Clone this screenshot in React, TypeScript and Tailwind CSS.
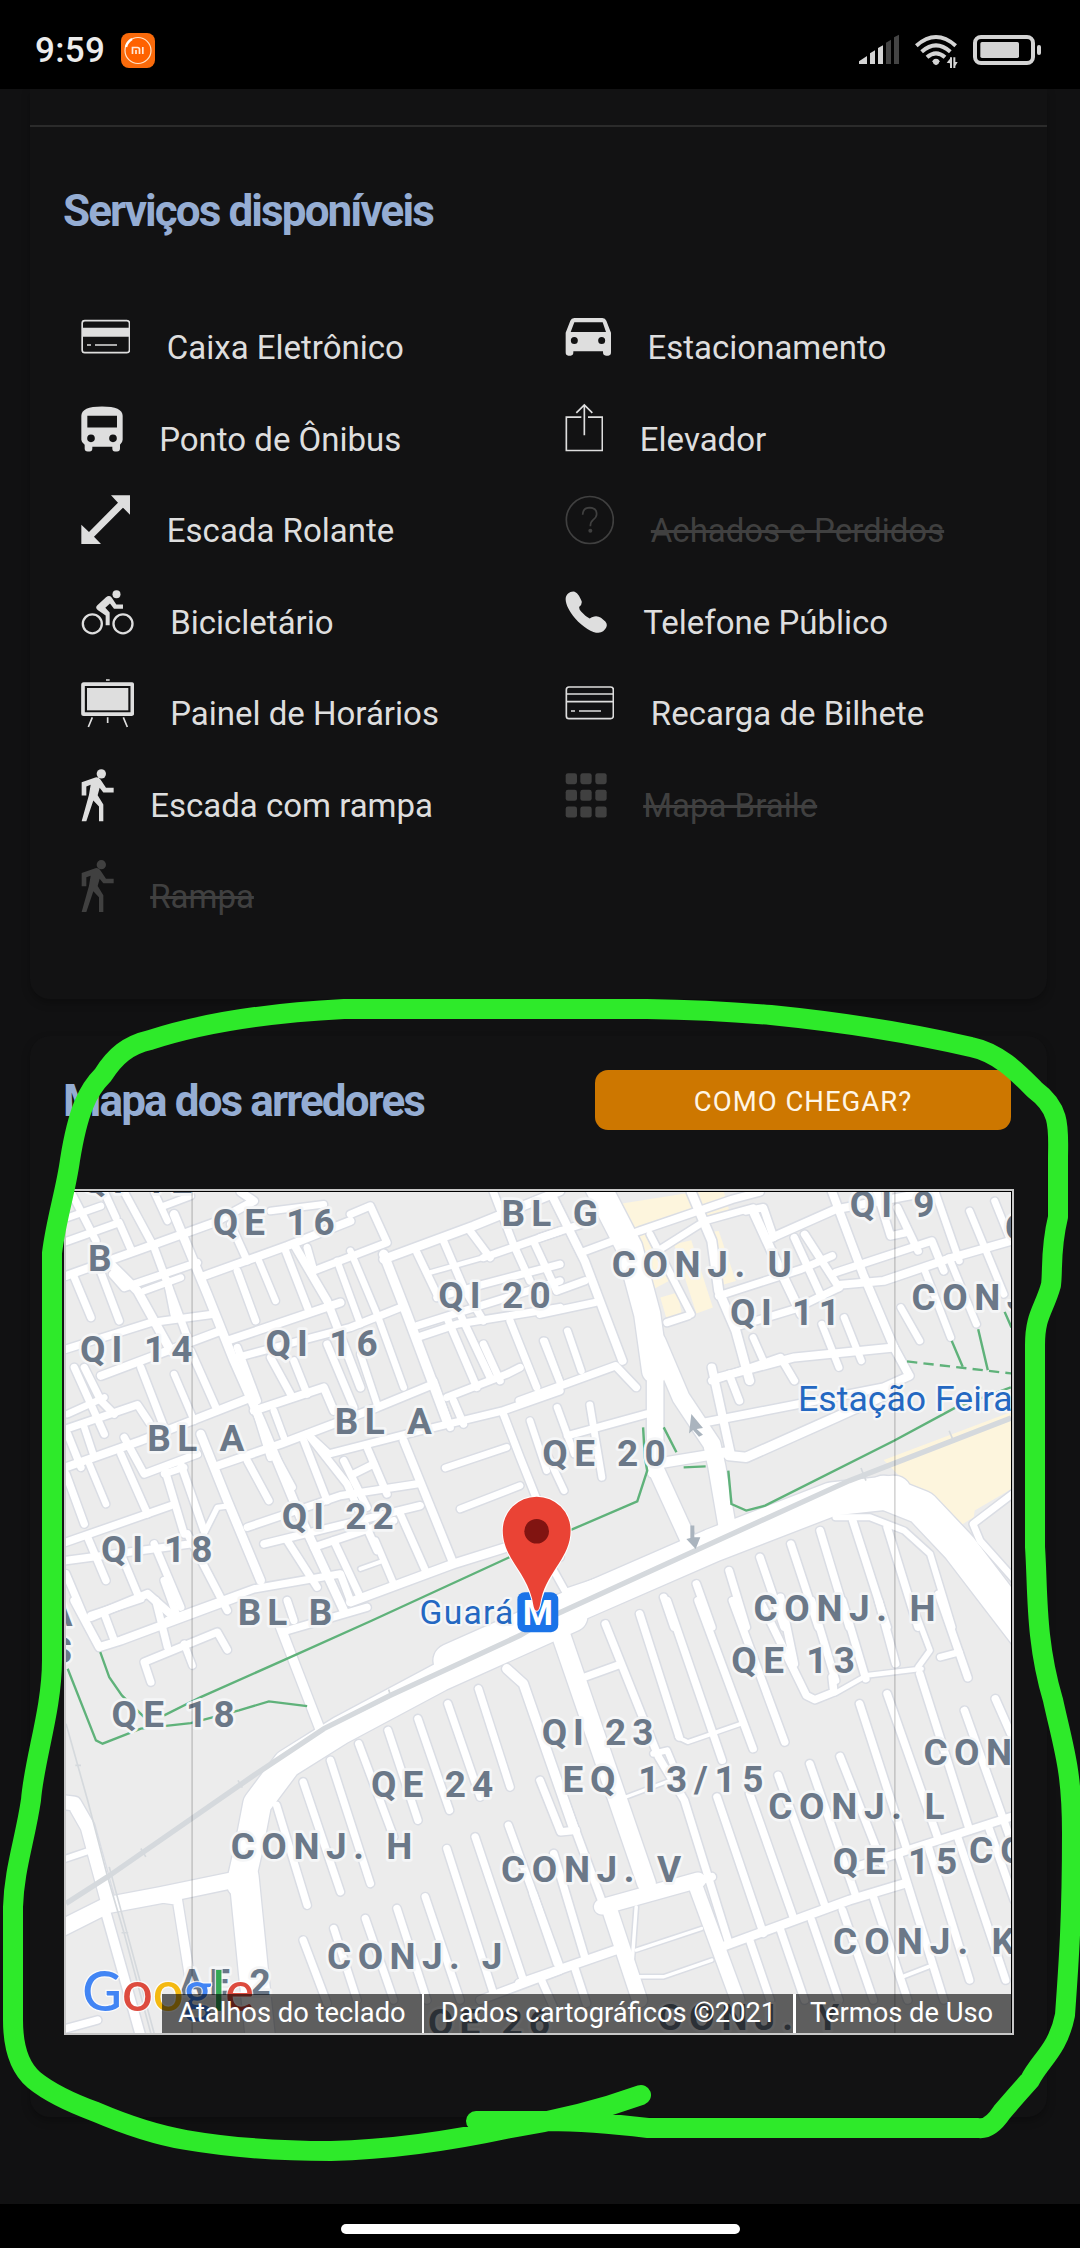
import React from "react";

type Service = {
  label: string;
  icon: React.ReactNode;
  x: number;
  y: number;
  w: number;
  off?: boolean;
};

const walker = (dy: number) => (
  <g transform={`translate(0 ${dy})`} fill="currentColor">
    <circle cx="184" cy="520" r="14" />
    <path d="M125 545L166 531Q176 528 182 538L198 562H221V576H190L179 562L173 584L190 612V662H177V618L160 600L139 662H125L147 583L152 553L139 558V585H125Z" />
  </g>
);

const left: Service[] = [
  {
    label: "Caixa Eletrônico", x: 123, y: 27, w: 148,
    icon: (
      <g fill="none" stroke="currentColor" strokeWidth="4">
        <rect x="126.500" y="92" width="142" height="96" rx="8" strokeWidth="5" />
        <path d="M126 113H268V140H126Z" fill="currentColor" stroke="none" />
        <path d="M141 165H153M165 165H231" strokeWidth="5" />
      </g>
    ),
  },
  {
    label: "Ponto de Ônibus", x: 123, y: 301.5, w: 125,
    icon: (
      <path fill="currentColor" fillRule="evenodd" d="M124 376Q124 348 186 348Q248 348 248 376V448Q248 456 240 463V474Q240 483 231 483H225Q217 483 217 474V469H157V474Q157 483 149 483H143Q134 483 134 474V463Q124 456 124 448ZM142 376V411H231V376ZM153 432A11 11 0 1 0 153 455A11 11 0 1 0 153 432ZM219 432A11 11 0 1 0 219 455A11 11 0 1 0 219 432Z" />
    ),
  },
  {
    label: "Escada Rolante", x: 123, y: 576, w: 148,
    icon: <path fill="currentColor" d="M213 616H270V674L249 653L162 740L183 762H124V704L147 726L234 638Z" />,
  },
  {
    label: "Bicicletário", x: 123, y: -79.5, w: 158,
    icon: (
      <g fill="none" stroke="currentColor" strokeWidth="7">
        <circle cx="157" cy="70" r="28.500" />
        <circle cx="249" cy="70" r="28.500" />
        <g fill="currentColor" stroke="none">
          <circle cx="229.500" cy="-19" r="12" />
          <path d="M172 14L198 -10Q208 -17 215 -9L229 12H249V25H222L210 9L196 22L209 36V74H197V45L174 29Q164 21 172 14Z" />
        </g>
      </g>
    ),
  },
  {
    label: "Painel de Horários", x: 123, y: 195, w: 158,
    icon: (
      <g fill="none" stroke="currentColor">
        <rect x="129" y="252.500" width="148" height="90" rx="2" strokeWidth="11" />
        <rect x="141" y="264" width="124" height="67" fill="currentColor" stroke="none" />
        <path d="M198 240H209M203 352V369M157 352L145 381M250 352L262 381" strokeWidth="5" />
      </g>
    ),
  },
  { label: "Escada com rampa", x: 123, y: 469.5, w: 98, icon: walker(0) },
  { label: "Rampa", x: 123, y: 744, w: 98, icon: walker(274), off: true },
];

const right: Service[] = [
  {
    label: "Estacionamento", x: 75, y: 27, w: 138,
    icon: (
      <path fill="currentColor" fillRule="evenodd" d="M77 128L91 92Q94 84 103 84H187Q196 84 199 92L213 128V187Q213 197 205 197H198Q189 197 189 187V184H100V187Q100 197 92 197H85Q77 197 77 187ZM92 126H198L188 97H103ZM103 141A10.500 10.500 0 1 0 103 162A10.500 10.500 0 1 0 103 141ZM185 141A10.500 10.500 0 1 0 185 162A10.500 10.500 0 1 0 185 141Z" />
    ),
  },
  {
    label: "Elevador", x: 75, y: 301.5, w: 115,
    icon: <path fill="none" stroke="currentColor" strokeWidth="5" d="M124 380H79V480H187V380H144M133 434V343M109 367L133 343L157 367" />,
  },
  {
    label: "Achados e Perdidos", x: 75, y: 576, w: 148, off: true,
    icon: (
      <g fill="none" stroke="currentColor" strokeWidth="5">
        <circle cx="149.500" cy="690" r="70.500" />
        <path d="M128 674Q129 653 149 653Q170 654 170 672Q170 681 160 689Q151 696 151 709" />
        <circle cx="151" cy="722" r="6" fill="currentColor" stroke="none" />
      </g>
    ),
  },
  {
    label: "Telefone Público", x: 75, y: -79.5, w: 125,
    icon: <path fill="currentColor" d="M77 -6C78 -18 88 -27 100 -27C111 -26 118 -14 125 2Q127 12 118 19Q116 25 124 34Q136 48 149 54Q155 50 163 48Q174 46 183 52L196 63Q203 71 199 80Q192 95 175 97C158 97 128 80 105 53C88 33 76 10 77 -6Z" />,
  },
  {
    label: "Recarga de Bilhete", x: 75, y: 195, w: 148,
    icon: (
      <g fill="none" stroke="currentColor" strokeWidth="5">
        <rect x="79" y="261" width="141" height="95" rx="8" />
        <path d="M79 282H220M79 305H220M93 333H105M117 333H183" />
      </g>
    ),
  },
  {
    label: "Mapa Braile", x: 75, y: 469.5, w: 125, off: true,
    icon: (
      <g fill="currentColor">
        {[518, 568, 618].map((y) => [77, 121, 166].map((x) => <rect key={`${x}-${y}`} x={x} y={y} width="34" height="33" rx="7" />))}
      </g>
    ),
  },
];

function ServiceRow({ s }: { s: Service }) {
  return (
    <li className={`flex h-[91.5px] ${s.off ? "text-[#404040]" : "text-[#dedede]"}`}>
      <svg className="h-[91.5px] shrink-0" width={s.w / 3} viewBox={`${s.x} ${s.y} ${s.w} 274.5`}>
        {s.icon}
      </svg>
      <span className={`ml-[36.5px] pt-[29px] text-[33px] leading-[40px] whitespace-nowrap ${s.off ? "line-through" : ""}`}>{s.label}</span>
    </li>
  );
}

type Road = [number, string];

const roadsA: Road[] = [
  [20, "75,182 235,125 270,205"], [22, "75,285 300,205 520,125 640,60 600,33"], [20, "215,280 250,320 470,245"],
  [22, "490,285 740,195 930,120"], [20, "800,200 820,270 1040,185 990,75 930,100"], [24, "1030,235 1300,135 1560,30"],
  [12, "1170,275 1330,230"], [20, "1330,230 1560,150"], [20, "1190,350 1330,310 1560,250"], [20, "1130,435 1240,400 1400,350 1560,300"],
  [20, "75,505 330,425 520,400"], [22, "180,585 380,510 540,450"], [22, "560,480 900,365"], [20, "590,530 930,440 1080,380"],
  [20, "75,745 290,672 325,725"], [22, "75,860 300,780 620,655"], [20, "250,770 310,880 470,820"], [22, "640,690 850,620 880,690"],
  [22, "530,855 720,790 1010,680 1180,610"], [20, "800,760 865,820 1100,760 1390,690 1560,630"], [20, "1130,470 1250,430 1560,380"],
  [20, "1220,650 1400,580 1440,560"], [20, "75,1085 390,975"], [20, "75,1140 450,1090"], [20, "620,1040 900,945 1130,910"], [20, "670,1090 1140,975"],
  [20, "380,1320 640,1225 900,1180 930,1260"], [24, "930,1265 1240,1150 1400,1100 1560,1040"], [20, "820,1100 1060,1020"], [18, "1215,862 1400,800"], [18, "1260,985 1440,915"],
  [20, "1390,700 1440,830 1560,1130"], [22, "150,1310 320,1240 400,1310"], [10, "960,1165 1030,1140"],
  [20, "90,33 165,180"], [18, "80,110 180,75"], [20, "190,33 225,110"], [18, "370,75 450,45"], [18, "340,33 380,120"], [20, "250,33 340,200 440,470"], [24, "400,100 500,340 580,540 660,720 780,1010 910,1290"],
  [24, "480,760 560,960 660,1200"], [18, "690,90 850,70"], [20, "570,130 620,240"], [20, "590,270 645,420"], [18, "655,240 705,360"], [20, "735,210 805,390"],
  [22, "760,190 860,360 960,620"], [18, "890,240 960,430"], [26, "1030,220 1100,400 1220,720"], [18, "930,210 1010,400 1090,620"],
  [20, "1130,215 1190,340"], [20, "1210,180 1270,320 1330,420"], [20, "1290,150 1350,230"], [20, "1360,33 1420,190 1470,300"], [20, "1480,180 1550,330"],
  [20, "100,290 150,410"], [20, "180,275 235,420"], [24, "210,250 290,330 390,510"], [20, "380,300 400,400"], [18, "310,330 420,290"],
  [20, "100,560 190,760"], [20, "130,560 180,660 220,700"], [20, "300,560 370,740"], [18, "400,580 460,720"], [20, "450,510 530,690"], [18, "190,650 80,700"],
  [20, "590,500 650,660"], [20, "690,530 750,640"], [20, "760,540 800,640"], [20, "860,490 940,680"], [18, "960,520 1010,670"], [20, "1220,410 1310,620"], [20, "1260,400 1350,590"],
  [20, "1330,490 1380,600"], [20, "1410,420 1490,620"], [16, "1515,480 1560,600"], [18, "1470,720 1520,870"],
  [22, "1090,780 1240,1150"], [20, "1180,600 1230,740"], [20, "1240,660 1270,730"],
  [20, "80,760 120,860"], [18, "130,740 160,830"], [20, "75,880 130,1030"], [18, "145,850 195,970"], [20, "240,820 320,1000"], [20, "370,860 430,1060"], [20, "420,850 490,1050"],
  [18, "370,880 430,860"], [14, "480,1080 530,980 570,975"], [20, "620,840 685,960"], [20, "690,800 755,920"], [20, "790,780 860,960"], [20, "810,770 920,910 1010,1110"],
  [20, "910,840 980,980"], [20, "980,800 1040,940"], [20, "940,880 1000,850"], [20, "140,1070 195,1200"], [20, "240,1120 290,1240"], [20, "340,1090 420,1280"], [20, "440,1060 560,1290"],
  [20, "75,1180 130,1310"], [20, "740,1080 830,1220"], [20, "880,1080 960,1250"], [18, "1005,1080 1060,1210"], [20, "1080,1000 1160,1180"], [20, "650,700 690,830"], [18, "700,690 730,770"],
];

const roadsB: Road[] = [
  [76, "160,0 260,200 312,400 335,570"], [48, "335,500 335,870"], [46, "335,860 450,1120"], [50, "340,480 410,650 500,790 515,860 550,1070"], [30, "335,850 540,815"],
  [100, "-260,1440 100,1275 500,1095 850,955 1030,935"], [100, "1000,935 1110,980 1220,1100 1420,1370"],
  [20, "120,215 290,150 560,55 640,33"], [18, "350,205 480,120 620,80"], [20, "520,345 760,265 850,225"], [22, "670,172 860,85 1130,33"], [20, "600,90 650,80 680,170"],
  [20, "860,275 1140,180 1175,270"], [22, "870,312 1000,300 1200,230 1370,180"], [20, "370,425 430,405"], [20, "580,435 740,385 870,320"], [20, "0,400 160,365"],
  [20, "-60,660 220,555 280,620"], [20, "0,170 120,130"], [20, "50,330 130,300"], [22, "30,33 130,240 240,540"], [18, "80,450 120,570"], [18, "10,480 60,610"],
  [24, "440,33 500,180 520,330 570,450 610,600"], [18, "320,160 440,400"], [20, "500,600 700,530 740,600"], [22, "500,560 555,820"],
  [22, "480,725 1000,620 1075,585 1030,500 940,280 850,33"], [26, "550,825 600,830 860,710 1010,640"], [22, "520,590 740,530 1030,500"], [24, "620,90 700,270 760,400"],
  [18, "820,430 870,560"], [18, "885,410 935,540"], [20, "740,170 820,350"], [20, "770,160 870,320"], [20, "980,33 1020,165 1065,155"], [20, "1040,80 1100,210"], [20, "550,580 580,660"],
  [18, "620,470 650,540"], [18, "1050,380 1105,480"], [18, "1120,270 1195,470"], [18, "1190,230 1270,430"], [18, "1250,90 1350,340"], [18, "1323,60 1370,180"], [18, "1150,33 1220,240"],
  [20, "80,765 310,700"], [18, "50,680 100,820"], [18, "145,672 180,890"], [18, "20,820 70,930"], [18, "40,1170 75,1235 205,1190"],
  [20, "360,1250 390,1340"], [20, "455,1210 500,1340"], [20, "550,1170 600,1340"], [20, "640,1130 710,1340"], [20, "730,1090 810,1340"], [20, "815,1050 900,1340"], [20, "910,1020 1010,1340"], [20, "1010,1040 1100,1340"],
  [16, "860,1010 960,1010 1060,1050 1135,1120 1200,1340"], [18, "1400,920 1260,1030 1280,1080 1400,1220"],
];

const roadsC: Road[] = [
  [84, "1600,50 1200,230 900,390 740,490 650,610 625,740 600,850"], [88, "610,830 640,1130 660,1320"], [48, "600,835 360,885 200,915 60,985"], [42, "60,605 100,610 140,680 200,900"],
  [26, "190,920 300,1310"], [28, "340,890 410,900 450,1150"], [16, "60,780 150,750"], [20, "60,1290 170,1260"],
  [22, "100,0 175,140 240,120 590,-10"], [20, "150,45 300,-5"], [20, "190,40 220,120"], [20, "345,0 380,140"], [20, "330,245 310,185 530,95 560,148"], [18, "430,130 455,195"],
  [28, "720,80 840,390"], [20, "740,90 980,20"], [20, "370,-60 410,50"], [20, "740,0 760,60"],
  [20, "708,615 800,915"], [20, "788,545 900,875"], [20, "870,480 990,850"], [20, "955,430 1060,710"], [20, "1043,390 1133,660"], [20, "1133,355 1228,630"], [20, "1223,310 1320,590"], [20, "1315,265 1410,560"],
  [26, "1400,205 1450,250 1600,680"], [20, "1405,675 1560,1100"], [20, "1305,710 1450,1140"], [20, "1220,745 1360,1180"], [20, "1155,890 1260,1200"], [20, "1070,925 1160,1200"], [20, "975,955 1060,1200"], [20, "880,985 950,1200"], [20, "788,1020 860,1210"],
  [22, "1320,1200 1560,1110"], [20, "1500,1130 1540,1220"],
];

const roadsD: Road[] = [
  [54, "60,100 170,430 310,850"], [46, "180,920 460,840"], [22, "440,850 500,830"], [44, "200,920 290,1200"], [40, "450,850 575,1200"],
  [20, "190,70 345,470 420,600 550,1030"], [20, "130,230 225,195"], [20, "290,40 405,410"], [10, "400,410 430,425 590,368"], [20, "370,0 530,480"], [20, "460,0 620,445"], [20, "560,0 712,425"],
  [20, "640,0 775,285 800,298 855,275 850,230"], [20, "700,-10 740,190"], [20, "790,0 860,240"], [20, "880,0 948,235"], [20, "985,0 1035,190"], [14, "1080,0 1135,150 1100,200"], [20, "1160,-20 1245,232"],
  [18, "1165,170 1220,155"], [12, "860,278 950,225 1110,205"], [20, "1105,220 1250,690"], [20, "1010,280 1160,720"], [20, "930,310 1065,740"], [20, "873,468 1000,800"], [20, "785,490 920,890"], [20, "693,525 830,920"], [20, "610,580 740,960"], [20, "515,590 650,1000"],
  [20, "1235,330 1370,720"], [20, "1325,295 1370,400"], [24, "530,1040 900,900 1060,850"], [22, "920,800 1370,650"],
  [20, "610,1020 670,1200"], [20, "700,990 770,1200"], [20, "790,960 870,1200"], [20, "880,930 970,1200"], [20, "970,890 1070,1200"], [20, "1045,770 1175,1200"], [20, "1130,740 1250,1140"], [20, "1215,710 1355,1140"], [20, "1305,680 1380,900"],
  [10, "1055,1130 1130,1100"], [24, "-60,1150 220,1050"], [20, "-20,880 50,1090"], [20, "40,760 130,1070"], [20, "0,540 60,695 105,690"], [20, "60,570 190,930"], [20, "100,1100 135,1210"], [8, "280,920 265,1130 360,1130 500,1080"], [8, "280,1050 470,985"], [16, "330,460 370,450 390,500"], [8, "250,590 380,540"],
];

const quads: [string, Road[]][] = [
  ["translate(0 0)", roadsA],
  ["translate(1500 0) scale(1.0332 1)", roadsB],
  ["translate(0 1260)", roadsC],
  ["translate(1500 1260) scale(1.0332 1)", roadsD],
];

const labels: [string, number, number, number][] = [
  ["QI 12", 120, 37, 336], ["QE 16", 516, 165, 367], ["B", 141, 272, 0], ["BL G", 1384, 138, 290], ["QI 20", 1194, 383, 338], ["QI 14", 117, 545, 338], ["QI 16", 675, 527, 337],
  ["BL A", 319, 812, 292], ["BL A", 883, 762, 292], ["QI 22", 724, 1047, 336], ["QI 18", 180, 1145, 335], ["BL B", 591, 1335, 285], ["QE 18", 212, 1642, 370], ["QE 24", 992, 1852, 367],
  ["CONJ. H", 570, 2037, 546], ["CONJ. J", 860, 2370, 527], ["AE 2", 416, 2447, 274], ["CONJ. V", 1383, 2107, 541], ["QI 23", 1505, 1695, 336], ["EQ 13/15", 1568, 1838, 604],
  ["QE 13", 2075, 1480, 372], ["CONJ. H", 2142, 1325, 547], ["CONJ. L", 2186, 1918, 530], ["QE 15", 2380, 2082, 374], ["CO", 2790, 2050, 170], ["CON", 2653, 1757, 266], ["CONJ. K", 2381, 2325, 547],
  ["QI 9", 2431, 110, 255], ["CONJ. U", 1716, 290, 541], ["QI 11", 2071, 433, 331], ["CONJ", 2617, 388, 348], ["QE 20", 1507, 857, 371], ["C", 2898, 180, 0], ["A", 20, 1340, 0], ["S", 25, 1450, 0],
  ["QE 26", 1163, 2568, 367], ["CONJ. Y", 1854, 2552, 545],
];

const casingWidth = (w: number) => (w <= 26 ? w + 11 : w + 8);
const fillWidth = (w: number) => (w <= 26 ? w + 2 : w);

function MapCanvas() {
  return (
    <svg className="block h-full w-full" viewBox="75 33 2841 2526" preserveAspectRatio="none" fontFamily="Roboto, sans-serif">
      <rect x="75" y="33" width="2841" height="2526" fill="#ececec" />
      <g transform={quads[1][0]} fill="#fdf5dd">
        <path d="M225 70L450 33H535L552 92L260 145ZM285 165L325 150L375 300L335 322ZM350 350L400 335L415 410L370 420ZM390 190L440 178L503 380L455 398ZM475 155L520 150L570 300L530 312Z" />
        <path d="M1380 690L1000 838L1040 880L1080 920L1215 1040L1262 1010L1265 990L1380 920Z" />
      </g>
      {[true, false].map((casing) => (
        <g key={String(casing)} fill="none" stroke={casing ? "#dadde4" : "#ffffff"} strokeLinecap="round" strokeLinejoin="round">
          {quads.map(([t, roads]) => (
            <g key={t} transform={t}>
              {roads.map(([w, p], i) => <polyline key={i} points={p} strokeWidth={casing ? casingWidth(w) : fillWidth(w)} />)}
            </g>
          ))}
        </g>
      ))}
      <g fill="none" stroke="#d5d9dd">
        <path d="M2916 712L2430 900L1934 1125L1540 1305L1440 1365L1050 1545L850 1645L640 1785L200 2090L75 2170" strokeWidth="16" />
        <path d="M75 1630L140 1860L200 2090L250 2260L330 2560M205 2060L340 2560" strokeWidth="5" />
        <path d="M103 1755H120M300 2005L315 2030M592 1800L605 1822M1045 1527L1052 1550M2465 862L2480 900M2730 750L2745 785M242 2258H262" strokeWidth="5" />
      </g>
      <g fill="none" stroke="#5fb27a" strokeWidth="7">
        <path d="M1408 1130L995 1320L750 1430L480 1550L370 1605M178 1415L205 1490L243 1545L310 1610M80 1465L165 1680L185 1690L300 1645L450 1628L595 1590L685 1563L800 1577" />
        <g transform={quads[1][0]}>
          <path d="M300 740L305 830L312 870L283 962L90 1048M360 740L397 815M418 860L482 857M548 870L557 970L600 990L655 975L1030 780L1210 680L1370 620M1198 480L1230 558M1275 445L1303 568M1352 393L1372 440" />
          <path d="M1068 542L1372 578" strokeDasharray="30 18" />
        </g>
      </g>
      <path d="M1955 700L1990 742L1971 745L1990 762L1978 768L1960 748L1948 758ZM1952 1035H1964V1070H1982L1968 1105L1940 1075L1952 1072Z" fill="#aab4be" />
      <g fill="#6b7888" stroke="#f5f6f7" strokeWidth="16" paintOrder="stroke" strokeLinejoin="round" fontSize="111" fontWeight="700">
        {labels.map(([t, x, y, w], i) => (
          <text key={i} x={x} y={y - 2} textLength={w || undefined}>{t}</text>
        ))}
      </g>
      <g fill="#2468c2" stroke="#f5f6f7" strokeWidth="14" paintOrder="stroke" strokeLinejoin="round">
        <text x="2276" y="691" fontSize="107" textLength="645">Estação Feira</text>
        <text x="1138" y="1331" fontSize="101" textLength="282">Guará</text>
      </g>
      <rect x="1432" y="1235" width="123" height="120" rx="22" fill="#1a73e8" />
      <text x="1494" y="1333" textAnchor="middle" fontSize="104" fontWeight="700" fill="#fff">M</text>
      <path d="M454 33V2560M2567 33V2560" stroke="#000" strokeOpacity=".28" strokeWidth="3" />
      <path d="M1490 1291C1481 1291 1480 1270 1476 1254C1455 1170 1388 1130 1388 1050A102 102 0 0 1 1592 1050C1592 1130 1525 1170 1504 1254C1500 1270 1499 1291 1490 1291Z" fill="#ea4335" stroke="#fff" strokeWidth="6" paintOrder="stroke" />
      <circle cx="1490" cy="1052" r="37" fill="#811411" />
      <text x="124" y="2492" fontSize="170" fontFamily="Lato, sans-serif" fontWeight="500" textLength="516" lengthAdjust="spacingAndGlyphs" stroke="#fff" strokeOpacity=".75" strokeWidth="8" paintOrder="stroke">
        <tspan fill="#4285f4">G</tspan><tspan fill="#dd4b3e">o</tspan><tspan fill="#f4b912">o</tspan><tspan fill="#4285f4">g</tspan><tspan fill="#34a853">l</tspan><tspan fill="#dd4b3e">e</tspan>
      </text>
    </svg>
  );
}

function StatusBar() {
  return (
    <header className="flex h-[89px] shrink-0 items-start bg-black pt-[20px] pl-[35px]">
      <span className="w-[86px] pt-[11px] text-[35px] leading-[40px] font-medium tracking-[0.3px] text-[#ececec]">9:59</span>
      <svg className="mt-[13px] h-[35px] w-[34px]" viewBox="0 0 34 35">
        <rect width="34" height="35" rx="8" fill="#f96a0b" />
        <circle cx="17" cy="17.500" r="13" fill="#ff6200" stroke="#ffe3c8" strokeWidth="1.200" />
        <path d="M5 14Q6 9 11 6" stroke="#fff" strokeWidth="2.500" fill="none" />
        <path d="M11.500 21V14.500H16.500Q18.500 14.500 18.500 16.500V21M15 17V21M21.800 14V21" stroke="#ffe8d8" strokeWidth="1.700" fill="none" />
      </svg>
      <svg className="ml-[695px] h-[60px] w-[210px]" viewBox="0 0 630 180">
        <g fill="#d4d4d4">
          <path d="M27 124L51 108V132H27ZM60 100L75 91V132H60ZM84 84L99 76V132H84Z" />
          <path fill="#444" d="M108 68L123 59V132H108ZM132 52L147 44V132H132Z" />
          <path d="M246 124Q258 110 270 124L258 136Z" />
          <circle cx="258" cy="125" r="9" />
          <path d="M290 128L300 116V112H306V144H300V130ZM310 112H316V126H323L316 138V144H310Z" />
          <rect x="391" y="66" width="116" height="48" rx="5" />
          <rect x="561" y="75" width="12" height="30" rx="6" />
        </g>
        <g fill="none" stroke="#d4d4d4" strokeWidth="12">
          <path d="M199 77Q258 25 317 77M215 95Q258 57 301 95M231 112Q258 88 285 112" />
          <rect x="375" y="51" width="174" height="78" rx="18" />
        </g>
      </svg>
    </header>
  );
}

export default function App() {
  return (
    <div className="relative flex h-[2248px] w-[1080px] flex-col overflow-hidden bg-[#111112] font-['Roboto',sans-serif]">
      <StatusBar />
      <main className="flex flex-1 flex-col overflow-hidden pr-[33px] pl-[30px]">
        <section className="h-[910px] shrink-0 rounded-b-[20px] bg-[#121213] shadow-[0_4px_8px_rgba(0,0,0,0.28)]">
          <div className="h-[38px] border-b-2 border-[#2b2b2b]" />
          <h2 className="pt-[56px] pl-[33px] text-[44px] leading-[56px] font-bold tracking-[-1.9px] text-[#95add3]">Serviços disponíveis</h2>
          <div className="flex pt-[60px] pl-[51px]">
            <ul className="w-[484px]">{left.map((s) => <ServiceRow key={s.label} s={s} />)}</ul>
            <ul>{right.map((s) => <ServiceRow key={s.label} s={s} />)}</ul>
          </div>
        </section>
        <section className="mt-[37px] h-[1081px] shrink-0 rounded-[20px] bg-[#121213] pt-[34px] pl-[34px] shadow-[0_4px_8px_rgba(0,0,0,0.28)]">
          <div className="flex h-[119px] w-[947px] items-start justify-between">
            <h2 className="-ml-[1px] pt-[3px] text-[44px] leading-[56px] font-bold tracking-[-1.9px] text-[#95add3]">Mapa dos arredores</h2>
            <button className="h-[60px] w-[416px] rounded-[13px] bg-[#cd7700] pt-[4px] text-[27.5px] tracking-[1px] text-[#fff6e6]">COMO CHEGAR?</button>
          </div>
          <div className="relative h-[846px] w-[950px] border-2 border-[#c8c8c8] bg-black">
            <div className="h-full w-full pt-[1px] pr-[1px]"><MapCanvas /></div>
            <div className="absolute right-[1px] bottom-0 flex h-[39px] text-[27.3px] leading-[39px] whitespace-nowrap text-white">
              <span className="w-[260px] bg-black/60 text-center">Atalhos do teclado</span>
              <span className="w-[2px] bg-white" />
              <span className="w-[369px] bg-black/60 text-center">Dados cartográficos ©2021</span>
              <span className="w-[3px] bg-white" />
              <span className="w-[215px] bg-black/60 pl-[14px]">Termos de Uso</span>
            </div>
          </div>
        </section>
      </main>
      <footer className="flex h-[44px] shrink-0 justify-center bg-black pt-[20px]">
        <div className="h-[10px] w-[399px] rounded-full bg-white" />
      </footer>
      <svg className="pointer-events-none absolute inset-0 h-[2248px] w-[1080px]" viewBox="0 0 1080 2248">
        <path
          d="M641 2095Q580 2117 510 2128Q413 2149 331 2151Q250 2151 186 2140Q145 2133 96 2112Q55 2097 34 2080Q13 2062 13 2020V1907C14 1870 25 1840 31 1800C34 1760 52 1710 52 1660V1253C56 1220 66 1190 70 1160C78 1110 88 1090 103 1075C115 1056 128 1045 150 1040Q227 1015 344 1009H647Q710 1010 771 1015Q880 1026 971 1047C1000 1053 1020 1075 1035 1090C1062 1110 1058 1130 1058 1160V1217C1050 1250 1053 1270 1051 1285C1044 1310 1035 1315 1035 1345V1547C1038 1590 1035 1640 1053 1700C1064 1750 1072 1770 1072 1833C1072 1917 1069 1960 1065 2015C1058 2050 1040 2060 1030 2080Q1012 2100 1002 2112Q990 2130 978 2128H648Q590 2121 548 2121H476"
          fill="none" stroke="#2eea2a" strokeWidth="20" strokeLinecap="round" strokeLinejoin="round"
        />
      </svg>
    </div>
  );
}
